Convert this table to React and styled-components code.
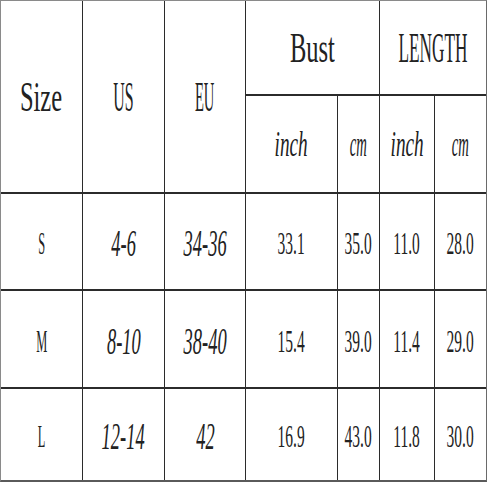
import React from "react";
import styled, { createGlobalStyle } from "styled-components";

const GlobalStyle = createGlobalStyle`
	html, body {
		margin: 0;
		padding: 0;
		background: #ffffff;
	}
`;

const SizeChart = styled.div`
	display: grid;
	grid-template-columns: 81px 81px 80px 91px 41px 54px 51px;
	grid-template-rows: 93px 96px 95px 96px 91px;
	column-gap: 1px;
	row-gap: 2px;
	width: max-content;
	background-color: #2b2b2b;
	border-top: 1px solid #8a8a8a;
	border-left: 1px solid #8a8a8a;
	border-right: 1px solid #6a6a6a;
	border-bottom: 2px solid #5a5a5a;
`;

const Cell = styled.div`
	display: flex;
	align-items: center;
	justify-content: center;
	background-color: #ffffff;
	overflow: hidden;
	grid-column: ${(props) => (props.span ? `span ${props.span}` : "auto")};
	grid-row: ${(props) => (props.rows ? `span ${props.rows}` : "auto")};
`;

// 원본 글꼴이 아주 좁아서 가로로 눌러줌
const Label = styled.span`
	display: inline-block;
	font-family: "Liberation Serif", "Times New Roman", serif;
	font-size: ${(props) => props.size}px;
	font-style: ${(props) => (props.italic ? "italic" : "normal")};
	line-height: 1;
	color: #222222;
	white-space: nowrap;
	transform: scaleX(${(props) => props.squeeze});
	margin-top: ${(props) => props.shift || 0}px;
`;

const rows = [
	{ size: "S", us: "4-6", eu: "34-36", bust: ["33.1", "35.0"], length: ["11.0", "28.0"] },
	{ size: "M", us: "8-10", eu: "38-40", bust: ["15.4", "39.0"], length: ["11.4", "29.0"] },
	{ size: "L", us: "12-14", eu: "42", bust: ["16.9", "43.0"], length: ["11.8", "30.0"] },
];

function App() {
	return (
		<>
			<GlobalStyle />
			<SizeChart>
				<Cell rows={2}>
					<Label size={43} squeeze={0.57}>Size</Label>
				</Cell>
				<Cell rows={2}>
					<Label size={43} squeeze={0.37}>US</Label>
				</Cell>
				<Cell rows={2}>
					<Label size={43} squeeze={0.34}>EU</Label>
				</Cell>
				<Cell span={2}>
					<Label size={43} squeeze={0.57}>Bust</Label>
				</Cell>
				<Cell span={2}>
					<Label size={43} squeeze={0.4}>LENGTH</Label>
				</Cell>
				<Cell>
					<Label size={35} italic squeeze={0.55}>inch</Label>
				</Cell>
				<Cell>
					<Label size={35} italic squeeze={0.42}>cm</Label>
				</Cell>
				<Cell>
					<Label size={35} italic squeeze={0.55}>inch</Label>
				</Cell>
				<Cell>
					<Label size={35} italic squeeze={0.42}>cm</Label>
				</Cell>

				{rows.map((row) => (
					<React.Fragment key={row.size}>
						<Cell>
							<Label size={31} squeeze={0.4} shift={4}>{row.size}</Label>
						</Cell>
						<Cell>
							<Label size={37} italic squeeze={0.5} shift={4}>{row.us}</Label>
						</Cell>
						<Cell>
							<Label size={37} italic squeeze={0.5} shift={4}>{row.eu}</Label>
						</Cell>
						{[...row.bust, ...row.length].map((value, i) => (
							<Cell key={i}>
								<Label size={31} squeeze={0.5} shift={4}>{value}</Label>
							</Cell>
						))}
					</React.Fragment>
				))}
			</SizeChart>
		</>
	);
}

export default App;
